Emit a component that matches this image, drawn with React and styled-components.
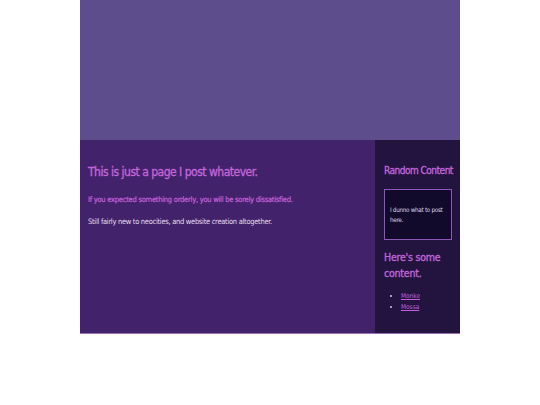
import React from 'react';
import styled, { createGlobalStyle } from 'styled-components';

const GlobalStyle = createGlobalStyle`
  html, body {
    margin: 0;
    padding: 0;
    background: #ffffff;
  }
  body {
    font-family: "DejaVu Sans Condensed", "DejaVu Sans", sans-serif;
  }
  h1, h2, p, ul {
    margin: 0;
  }
`;

const Page = styled.div`
  width: 380px;
  margin: 0 auto;
  border-bottom: 1px solid #9a72b8;
`;

const Header = styled.header`
  height: 140px;
  background-color: #5d4d8c;
`;

const Body = styled.div`
  display: flex;
  height: 193px;
`;

const Main = styled.main`
  flex: 1;
  background-color: #42236b;
  padding: 23px 8px 0;
`;

const Title = styled.h1`
  font-size: 12px;
  letter-spacing: -0.5px;
  font-weight: 400;
  line-height: 18px;
  color: #c466dc;
  -webkit-text-stroke: 0.3px #c466dc;
`;

const Lead = styled.p`
  margin-top: ${({ accent }) => (accent ? '13px' : '10px')};
  font-size: 7.5px;
  line-height: 12px;
  letter-spacing: ${({ accent }) => (accent ? '-0.25px' : '-0.3px')};
  color: ${({ accent }) => (accent ? '#c460dc' : '#e6dcee')};
  -webkit-text-stroke: ${({ accent }) => (accent ? '0.2px #c460dc' : '0')};
`;

const Sidebar = styled.aside`
  width: 85px;
  background-color: #22133f;
  padding: 23px 8px 0 9px;
  box-sizing: border-box;
`;

const SideTitle = styled.h2`
  font-size: 10px;
  letter-spacing: -0.5px;
  font-weight: 400;
  line-height: 16px;
  white-space: ${({ nowrap }) => (nowrap ? 'nowrap' : 'normal')};
  color: #c466dc;
  -webkit-text-stroke: 0.3px #c466dc;
`;

const Note = styled.div`
  margin-top: 10px;
  height: 51px;
  box-sizing: border-box;
  border: 1px solid #8f55b8;
  background-color: #120a2a;
  padding: 0 3px 0 5px;
  display: flex;
  align-items: center;
  font-size: 6.3px;
  letter-spacing: -0.3px;
  line-height: 10px;
  color: #ded4ea;
`;

const BigTitle = styled(SideTitle)`
  margin-top: 9px;
  font-size: 10.5px;
  letter-spacing: -0.2px;
`;

const Links = styled.ul`
  margin-top: 10px;
  padding-left: 17px;
  font-size: 6.5px;
  line-height: 11px;
  color: #d8c8e8;
`;

const Link = styled.a`
  color: #c460dc;
  text-decoration: underline;
`;

export default function App() {
  return (
    <>
      <GlobalStyle />
      <Page>
        <Header />
        <Body>
          <Main>
            <Title>This is just a page I post whatever.</Title>
            <Lead accent>If you expected something orderly, you will be sorely dissatisfied.</Lead>
            <Lead>Still fairly new to neocities, and website creation altogether.</Lead>
          </Main>
          <Sidebar>
            <SideTitle nowrap>Random Content</SideTitle>
            <Note>I dunno what to post here.</Note>
            <BigTitle>Here's some content.</BigTitle>
            <Links>
              <li><Link href="#">Monke</Link></li>
              <li><Link href="#">Mossa</Link></li>
            </Links>
          </Sidebar>
        </Body>
      </Page>
    </>
  );
}
